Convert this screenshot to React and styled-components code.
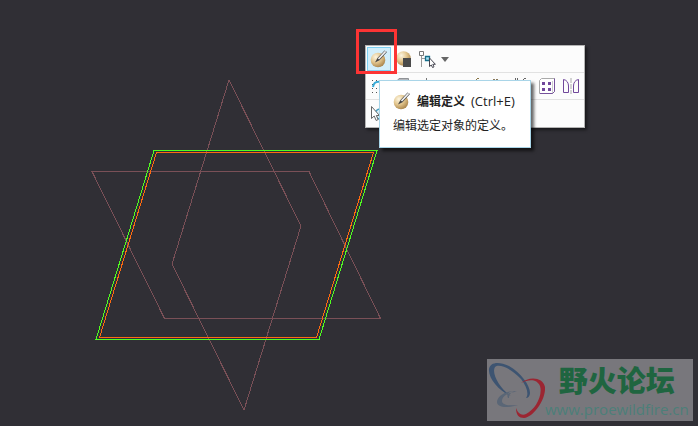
import React from 'react';
import styled, { createGlobalStyle } from 'styled-components';

const GlobalStyle = createGlobalStyle`
  * {
    box-sizing: border-box;
  }
  body {
    margin: 0;
    background: #302f35;
    font-family: "Open Sans", "Noto Sans CJK SC", sans-serif;
    font-size: 12px;
    color: #222;
  }
`;

const Viewport = styled.main`
  position: relative;
  min-height: 100vh;
  overflow: hidden;
  background: #302f35;
`;

const Sketch = styled.svg`
  display: block;
  shape-rendering: crispEdges;
  fill: none;
`;

/* the floating mini toolbar sits over the graphics area */
const MiniToolbar = styled.div`
  position: absolute;
  left: 365px;
  top: 45px;
  width: 220px;
  background: #fcfcfc;
  border: 1px solid #b4b4b4;
  box-shadow: 2px 2px 3px rgba(0, 0, 0, 0.5);
`;

const ToolRow = styled.div`
  display: flex;
  align-items: center;
  height: 27px;
  padding: 0 1px;
  border-top: 1px solid #e2e2e2;
  &:first-child{
    height: 26px;
    border-top: none;
  }
  &:last-child{
    height: 28px;
  }
`;

const ToolButton = styled.button`
  display: flex;
  align-items: center;
  justify-content: center;
  flex: none;
  width: ${(props) => (props.$narrow ? '12px' : '24px')};
  height: 24px;
  padding: 0;
  border: 1px solid ${(props) => (props.$active ? '#7fd0f2' : 'transparent')};
  background: ${(props) => (props.$active ? '#d3effb' : 'transparent')};
`;

const Highlight = styled.div`
  position: absolute;
  left: 356px;
  top: 29px;
  width: 41px;
  height: 45px;
  border: 3px solid #fc3434;
  pointer-events: none;
`;

const Tooltip = styled.div`
  position: absolute;
  left: 379px;
  top: 80px;
  width: 152px;
  height: 68px;
  padding: 11px 13px;
  background: #fff;
  border: 1px solid #a9d5e8;
  box-shadow: 3px 3px 3px rgba(0, 0, 0, 0.6);
  white-space: nowrap;
`;

const TipTitle = styled.div`
  display: flex;
  align-items: center;
  height: 18px;
  gap: 6px;
`;

const Shortcut = styled.span`
  font-size: 13px;
`;

const TipText = styled.p`
  margin: 7px 0 0;
  line-height: 18px;
`;

const Watermark = styled.div`
  position: absolute;
  right: 5px;
  bottom: 5px;
  display: flex;
  width: 206px;
  height: 62px;
  background: #78777c;
`;

const SiteName = styled.div`
  display: flex;
  flex-direction: column;
  align-items: center;
  white-space: nowrap;
`;

const ForumTitle = styled.strong`
  font-family: "Noto Sans CJK SC", sans-serif;
  font-size: 29px;
  font-weight: 900;
  line-height: 40px;
  color: #1f6540;
`;

const SiteUrl = styled.span`
  font-size: 15px;
  line-height: 20px;
  color: #4c7f79;
`;

const Sphere = ({ id, cx = 8, cy = 10, children }) => (
    <svg width="18" height="18" viewBox="0 0 18 18">
        <defs>
            <radialGradient id={id} cx="0.35" cy="0.3" r="0.75">
                <stop offset="0" stopColor="#fdf6e2" />
                <stop offset="0.5" stopColor="#e3c68e" />
                <stop offset="1" stopColor="#a8834a" />
            </radialGradient>
        </defs>
        <circle cx={cx} cy={cy} r="7.3" fill={`url(#${id})`} />
        {children}
    </svg>
);

const EditIcon = ({ id }) => (
    <Sphere id={id}>
        <path d="M5 12.5L7.5 8L14.5 0.5L17 2L9.5 10.2Z" fill="#444" />
        <path d="M8.5 9L15.6 1.4" stroke="#f0f0f0" strokeWidth="1.7" />
    </Sphere>
);

const SquareIcon = () => (
    <Sphere id="ball-square" cx={9.5} cy={8.5}>
        <rect x="9" y="8" width="8" height="9" fill="#4a4a4a" />
    </Sphere>
);

const TreeIcon = () => (
    <svg width="18" height="18" viewBox="0 0 18 18" fill="none">
        <path d="M3.5 5V17M3.5 8.5H8" stroke="#999" />
        <path d="M1.5 1.5H5.5V5.5H1.5Z" fill="#fff" stroke="#777" />
        <path d="M7.5 6.5H11.5V10.5H7.5Z" fill="#a8e4f5" stroke="#176f8b" strokeWidth="1.3" />
        <path d="M11.5 8V16.5L13.3 15L14.6 17.6L16 16.8L14.8 14.3H17.4Z" fill="#fff" stroke="#454550" />
    </svg>
);

const SnapIcon = () => (
    <svg width="18" height="18" viewBox="0 0 18 18" fill="none">
        <path
            d="M2 3.5H16M2 7.5H5M2 11.5H16M2 15.5H16"
            stroke="#555"
            strokeDasharray="1 3"
        />
        <path d="M3 10C4 3 13 3 14 10" stroke="#36a9d6" strokeWidth="2" />
    </svg>
);

const BoxIcon = () => (
    <svg width="18" height="18" viewBox="0 0 18 18">
        <path d="M5 1.5H14.5V4L13 14H3V4Z" fill="#b5b8bd" stroke="#909296" />
    </svg>
);

const MarksIcon = ({ d, color }) => (
    <svg width="18" height="18" viewBox="0 0 18 18" fill="none">
        <path d={d} stroke={color} />
    </svg>
);

const PatternIcon = () => (
    <svg width="18" height="18" viewBox="0 0 18 18" fill="none">
        <path d="M1.5 3.5L3.5 1.5H16.5V14.5L14.5 16.5H1.5Z" fill="#fff" stroke="#aaa" />
        <path d="M16.5 1.5V14.5L14.5 16.5H2" stroke="#76529c" />
        <path d="M14.5 4V16" stroke="#ccc" />
        <path
            d="M4 5H7V8H4ZM10 5H13V8H10ZM4 11H7V14H4ZM10 11H13V14H10Z"
            fill="#70479b"
        />
    </svg>
);

const MirrorIcon = () => (
    <svg width="18" height="18" viewBox="0 0 18 18" fill="none">
        <path d="M9 1V17" stroke="#aaa" strokeDasharray="5 1" />
        <path d="M1.5 15.5V2.5C5 3 6.5 6 6.5 9V15.5Z" stroke="#70479b" />
        <path d="M16.5 15.5V2.5C13 3 11.5 6 11.5 9V15.5Z" stroke="#70479b" />
    </svg>
);

const SearchPickIcon = () => (
    <svg width="18" height="18" viewBox="0 0 18 18" fill="none">
        <circle cx="10" cy="9" r="5" fill="#d7f1fa" stroke="#459fbf" strokeWidth="1.5" />
        <path d="M1.5 1.5V13.5L4.2 11L6.2 15.5L8.2 14.5L6.3 10.5H9.5Z" fill="#fff" stroke="#666" />
    </svg>
);

const SiteLogo = () => (
    <svg width="58" height="62" viewBox="0 0 58 62">
        <path
            fill="#3d5471"
            d="M24 37C12 32 1 19 2 10C3 3 12 2 22 7C34 14 43 26 43 34C43 37 41 39 39 39C42 35 40 28 34 20C25 10 12 4 8 8C4 14 13 30 24 37Z"
        />
        <path
            fill="#5a6676"
            d="M30 33C22 30 10 36 10 43C10 49 21 49 31 46C22 47 15 46 15 42C15 37 22 33 30 33ZM21 39C19 35 22 32 29 32C24 33 22 35 22 39Z"
        />
        <path
            fill="#9b2632"
            d="M34 24C42 17 56 18 58 28C59 40 47 58 37 59C32 59 29 56 29 49C31 55 35 57 39 55C48 51 56 37 53 27C50 20 42 20 34 24Z"
        />
    </svg>
);

const App = () => (
    <>
        <GlobalStyle />
        <Viewport>
            <Sketch width="698" height="426" viewBox="0 0 698 426">
                <g stroke="#7a5057">
                    <path d="M92 171.5H309L380.5 318.5H164.5Z" />
                    <path d="M229 80L301 226L244 410L172 264Z" />
                </g>
                <path stroke="#ff6a10" d="M156.5 152.5H373.5L316.5 337.5H99.5Z" />
                <path stroke="#50ff20" d="M154 150.5H377L319 339.5H96Z" />
            </Sketch>

            <MiniToolbar role="toolbar">
                <ToolRow>
                    <ToolButton $active aria-label="编辑定义"><EditIcon id="ball-edit" /></ToolButton>
                    <ToolButton aria-label="编辑"><SquareIcon /></ToolButton>
                    <ToolButton aria-label="选择父项"><TreeIcon /></ToolButton>
                    <ToolButton $narrow aria-label="更多">
                        <svg width="8" height="5" viewBox="0 0 8 5">
                            <path d="M0 0H8L4 5Z" fill="#666" />
                        </svg>
                    </ToolButton>
                </ToolRow>
                <ToolRow>
                    <ToolButton aria-label="捕捉"><SnapIcon /></ToolButton>
                    <ToolButton aria-label="实体"><BoxIcon /></ToolButton>
                    <ToolButton aria-label="点"><MarksIcon d="M8.5 1V3" color="#777" /></ToolButton>
                    <ToolButton aria-label="轴"><MarksIcon d="M9 6V14" color="#555" /></ToolButton>
                    <ToolButton aria-label="曲线"><MarksIcon d="M11 1.5H13M10.5 2V8" color="#8a7748" /></ToolButton>
                    <ToolButton aria-label="基准"><MarksIcon d="M3 2.5H5M6 2.5H8" color="#8a7a5c" /></ToolButton>
                    <ToolButton aria-label="平行"><MarksIcon d="M1.5 1V14M3.5 1V14M10 1.5H12M9.5 2V8" color="#666" /></ToolButton>
                    <ToolButton aria-label="阵列"><PatternIcon /></ToolButton>
                    <ToolButton aria-label="镜像"><MirrorIcon /></ToolButton>
                </ToolRow>
                <ToolRow>
                    <ToolButton aria-label="从列表中拾取"><SearchPickIcon /></ToolButton>
                </ToolRow>
            </MiniToolbar>
            <Highlight />
            <Tooltip role="tooltip">
                <TipTitle>
                    <EditIcon id="ball-tip" />
                    <strong>编辑定义</strong>
                    <Shortcut>(Ctrl+E)</Shortcut>
                </TipTitle>
                <TipText>编辑选定对象的定义。</TipText>
            </Tooltip>

            <Watermark>
                <SiteLogo />
                <SiteName>
                    <ForumTitle>野火论坛</ForumTitle>
                    <SiteUrl>www.proewildfire.cn</SiteUrl>
                </SiteName>
            </Watermark>
        </Viewport>
    </>
);

export default App;
